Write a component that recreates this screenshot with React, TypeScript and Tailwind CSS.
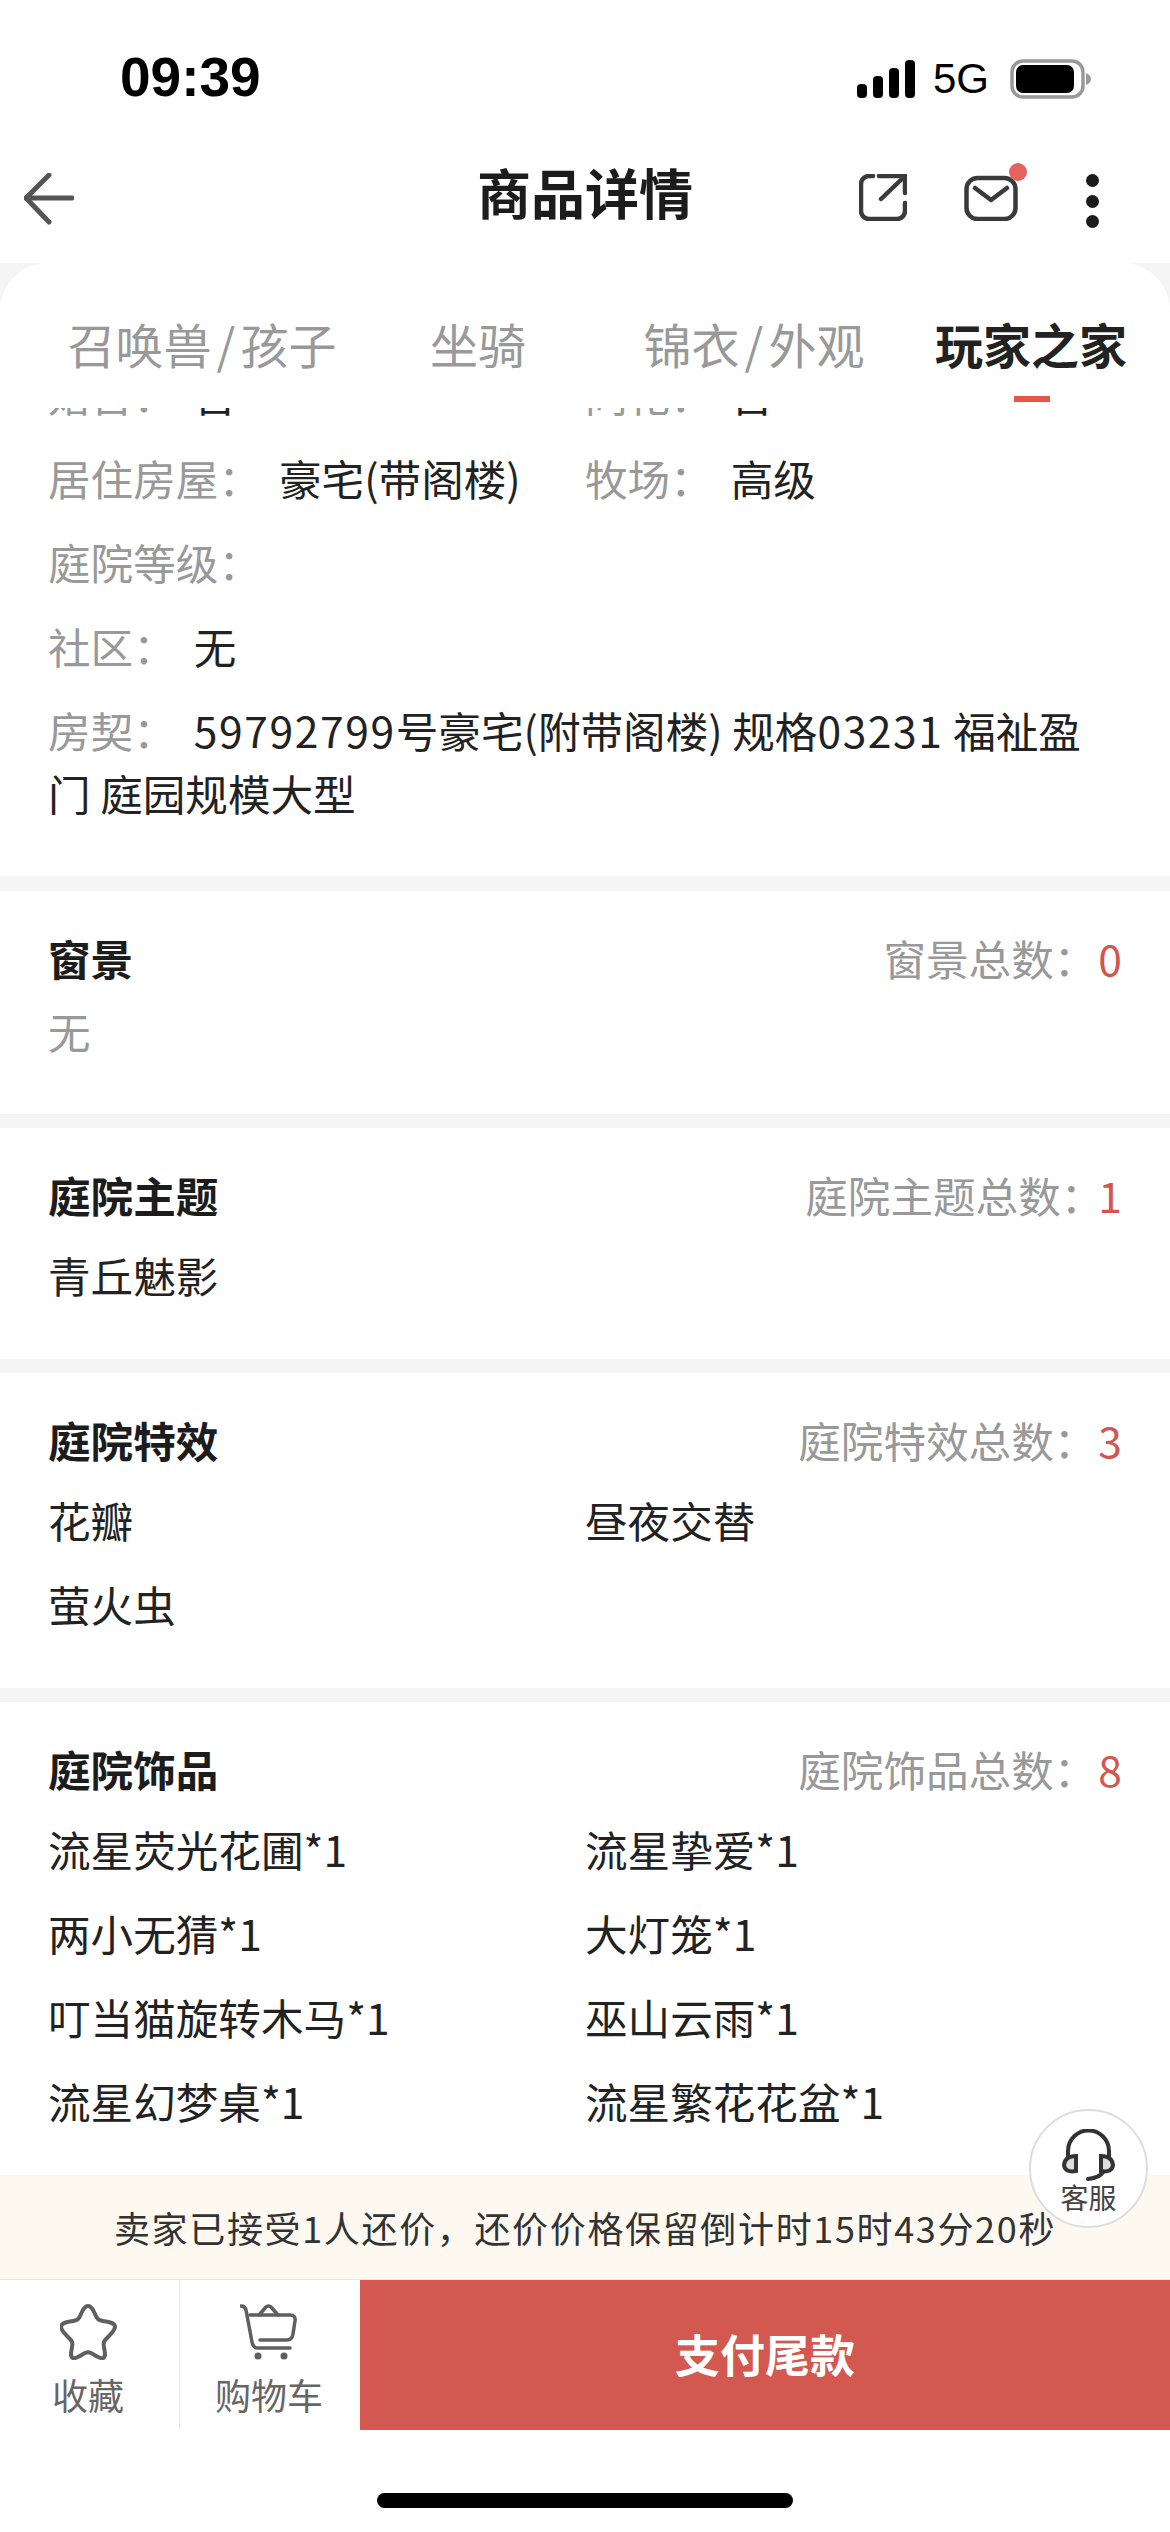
const COLON = "\uFF1A";
const COMMA = "\uFF0C";

const tabs = ["召唤兽/孩子", "坐骑", "锦衣/外观", "玩家之家"];

const sections = [
  { title: "庭院主题", total: "庭院主题总数", count: 1, items: ["青丘魅影"] },
  { title: "庭院特效", total: "庭院特效总数", count: 3, items: ["花瓣", "昼夜交替", "萤火虫"] },
  {
    title: "庭院饰品",
    total: "庭院饰品总数",
    count: 8,
    items: [
      "流星荧光花圃*1",
      "流星挚爱*1",
      "两小无猜*1",
      "大灯笼*1",
      "叮当猫旋转木马*1",
      "巫山云雨*1",
      "流星幻梦桌*1",
      "流星繁花花盆*1",
    ],
  },
];

const Field = ({ label, value }: { label: string; value?: string }) => (
  <div className="flex">
    <span className="text-[#999999]">
      {label}
      {COLON}
    </span>
    {value && <span className="ml-[18px] text-[#222222]">{value}</span>}
  </div>
);

const SectionHead = ({ title, total, count }: { title: string; total: string; count: number }) => (
  <div className="flex items-center justify-between">
    <span className="font-bold text-[#1c1c1c]">{title}</span>
    <span className="flex text-[#999999]">
      {total}
      {COLON}
      {/* the 1 sits tighter against the label than the wider digits */}
      <span className={count === 1 ? "-ml-[5px] text-[#d1574f]" : "ml-[2px] text-[#d1574f]"}>{count}</span>
    </span>
  </div>
);

const Section = ({ title, total, count, items }: (typeof sections)[number]) => (
  <section className="mt-[14px] bg-white px-[48px] pt-[35px] pb-[53px]">
    <SectionHead title={title} total={total} count={count} />
    <div className="mt-[17px] grid grid-cols-2 gap-y-[21px] text-[#222222]">
      {items.map((item) => (
        <div key={item}>{item}</div>
      ))}
    </div>
  </section>
);

export default function App() {
  return (
    <div className="relative flex h-[2532px] w-[1170px] flex-col overflow-hidden bg-[#f5f5f5] [font-family:'Noto_Sans_CJK_SC',sans-serif] text-[42.6px] leading-[63px]">
      {/* status bar + nav */}
      <div className="h-[263px] bg-white">
        <div className="flex h-[130px] items-start justify-between pt-[51px] pr-[78px] pl-[120px]">
          <span className="[font-family:'Liberation_Sans',sans-serif] text-[55px] leading-[52px] font-bold text-black">09:39</span>
          <div className="flex items-center pt-[6px]">
            <svg width="58" height="38" viewBox="0 0 58 38">
              <rect x="0" y="24" width="10" height="14" rx="4" fill="#000" />
              <rect x="16" y="16" width="10" height="22" rx="4" fill="#000" />
              <rect x="32" y="8" width="10" height="30" rx="4" fill="#000" />
              <rect x="48" y="0" width="10" height="38" rx="4" fill="#000" />
            </svg>
            <span className="ml-[18px] [font-family:'Liberation_Sans',sans-serif] text-[42px] leading-[44px] text-black">5G</span>
            <svg className="ml-[21px]" width="82" height="40" viewBox="0 0 82 40">
              <rect x="2" y="2" width="71" height="36" rx="11" fill="none" stroke="#999999" strokeWidth="3.5" />
              <rect x="6" y="6" width="58" height="28" rx="7" fill="#000" />
              <path d="M76 14 Q81 16 81 20 Q81 24 76 26 Z" fill="#999999" />
            </svg>
          </div>
        </div>
        <div className="grid h-[133px] grid-cols-[1fr_auto_1fr] items-start">
          <div className="pt-[43px] pl-[24px]">
            <svg className="block" width="50" height="52" viewBox="0 0 50 52" fill="none" stroke="#555555" strokeWidth="5" strokeLinecap="round" strokeLinejoin="round">
              <path d="M25 2 L2 25 L25 49" />
              <path d="M2 25 H48" />
            </svg>
          </div>
          <div className="pt-[30px] text-[54px] leading-[64px] font-bold text-[#1c1c1c]">商品详情</div>
          <div className="flex items-start justify-end pt-[44px] pr-[71px]">
            <svg width="48" height="47" viewBox="0 0 48 47" fill="none" stroke="#3a3a3a" strokeWidth="4.5" strokeLinecap="round" strokeLinejoin="round">
              <path d="M14 2 H10 A8 8 0 0 0 2 10 V37 A8 8 0 0 0 10 45 H38 A8 8 0 0 0 46 37 V29" />
              <path d="M20 2 H46 V19" />
              <path d="M46 2 L22 25" />
            </svg>
            <div className="relative ml-[57px] h-[47px] w-[54px]">
              <svg width="54" height="47" viewBox="0 0 54 47" fill="none" stroke="#3a3a3a" strokeWidth="4.5" strokeLinecap="round" strokeLinejoin="round">
                <rect x="2.5" y="4" width="49" height="41" rx="11" />
                <path d="M11 14 L27 26 L43 14" />
              </svg>
              <span className="absolute -top-[11px] -right-[9px] h-[18px] w-[18px] rounded-full bg-[#e5635f]" />
            </div>
            <div className="ml-[68px] flex flex-col gap-[7.5px]">
              <span className="h-[13px] w-[13px] rounded-full bg-[#1c1c1c]" />
              <span className="h-[13px] w-[13px] rounded-full bg-[#1c1c1c]" />
              <span className="h-[13px] w-[13px] rounded-full bg-[#1c1c1c]" />
            </div>
          </div>
        </div>
      </div>

      {/* sheet */}
      <div className="flex min-h-0 flex-1 flex-col overflow-hidden rounded-t-[48px] bg-white">
        <div className="z-10 grid h-[145px] shrink-0 grid-cols-4 bg-white pr-[2px] pl-[64px]">
          {tabs.map((tab, i) => {
            const [a, b] = tab.split("/");
            return (
              <div
                key={tab}
                className={
                  i === 3
                    ? "relative pt-[45px] pl-[2px] text-center text-[48px] leading-[70px] font-bold text-[#222222]"
                    : "relative pt-[45px] text-center text-[48px] leading-[70px] text-[#999999]"
                }
              >
                {a}
                {b && (
                  <>
                    <span className="mx-[5px]">/</span>
                    {b}
                  </>
                )}
                {i === 3 && <span className="absolute top-[133px] left-[122px] h-[6px] w-[36px] bg-[#e8534a]" />}
              </div>
            );
          })}
        </div>

        <div className="min-h-0 flex-1 overflow-hidden bg-[#f5f5f5]">
          <div className="-mt-[46px]">
            <section className="bg-white px-[48px] pb-[52px]">
              <div className="grid grid-cols-2 gap-y-[21px]">
                <Field label="婚否" value="否" />
                <Field label="同花" value="否" />
                <Field label="居住房屋" value="豪宅(带阁楼)" />
                <Field label="牧场" value="高级" />
                <Field label="庭院等级" />
                <div />
                <Field label="社区" value="无" />
                <div />
              </div>
              <p className="mt-[21px] text-[#222222]">
                <span className="mr-[18px] text-[#999999]">
                  房契
                  {COLON}
                </span>
                <span className="tracking-[1.6px]">59792799</span>号豪宅(附带阁楼) 规格<span className="tracking-[1.6px]">03231</span> 福祉盈
                <br />门 庭园规模大型
              </p>
            </section>

            <section className="mt-[15px] bg-white px-[48px] pt-[35px] pb-[52px]">
              <SectionHead title="窗景" total="窗景总数" count={0} />
              <div className="mt-[10px] text-[#999999]">无</div>
            </section>

            {sections.map((s) => (
              <Section key={s.title} {...s} />
            ))}
          </div>
        </div>

        {/* counter-offer notice */}
        <div className="flex h-[105px] shrink-0 items-center justify-center border-b border-[#e6e6e6] bg-[#fdf9f0] text-[36px] tracking-[1.65px] text-[#333333]">
          卖家已接受1人还价{COMMA}还价价格保留倒计时15时43分20秒
        </div>

        {/* bottom actions */}
        <div className="flex h-[150px] shrink-0 bg-white">
          <div className="flex w-[180px] flex-col items-center border-r border-[#e6e6e6] pt-[24px] pr-[3px]">
            <svg width="57" height="57" viewBox="0 0 57 57" fill="none" stroke="#5f5f5f" strokeWidth="4" strokeLinejoin="round">
              <path d="M28 2 C31 2 33 5 35 10 C37 15 38 16 43 17 C50 18 55 19 55 23 C55 26 52 29 48 33 C44 37 43 38 44 43 C45 49 46 53 43 54 C40 55 35 51 31 49 C29 48 27 48 25 49 C21 51 16 55 13 54 C10 53 11 49 12 43 C13 38 12 37 8 33 C4 29 1 26 1 23 C1 19 6 18 13 17 C18 16 19 15 21 10 C23 5 25 2 28 2 Z" />
            </svg>
            <span className="mt-[7px] text-[36px] leading-[52px] text-[#666666]">收藏</span>
          </div>
          <div className="flex w-[180px] flex-col items-center pt-[24px] pr-[2px]">
            <svg width="58" height="57" viewBox="0 0 58 57" fill="none" stroke="#5f5f5f" strokeWidth="3.5" strokeLinecap="round" strokeLinejoin="round">
              <path d="M1 2 Q5 2 6 6 L12 38 Q13 44 18 44 L50 44" />
              <path d="M10 11 H50 Q56 11 55 17 L53 30 Q52 36 47 36 L20 36" />
              <path d="M19 11 L26 3 Q28 1 31 3 L38 11" />
              <circle cx="18" cy="52" r="3.5" fill="#5f5f5f" stroke="none" />
              <circle cx="44" cy="52" r="3.5" fill="#5f5f5f" stroke="none" />
            </svg>
            <span className="mt-[7px] text-[36px] leading-[52px] text-[#666666]">购物车</span>
          </div>
          <div className="flex flex-1 items-center justify-center bg-[#d25850] pb-[3px] text-[45px] font-bold text-white">
            支付尾款
          </div>
        </div>

        {/* home indicator */}
        <div className="flex h-[102px] shrink-0 justify-center bg-white pt-[63px]">
          <span className="h-[15px] w-[416px] rounded-full bg-black" />
        </div>
      </div>

      {/* floating customer service */}
      <div className="absolute top-[2109px] left-[1029px] flex h-[119px] w-[119px] flex-col items-center rounded-full border-2 border-[#dddddd] bg-white/90 pt-[18px]">
        <svg width="55" height="52" viewBox="0 0 55 52" fill="none" stroke="#333333" strokeWidth="4" strokeLinecap="round">
          <path d="M7 28 V22 A20.5 20.5 0 0 1 48 22 V28" />
          <path d="M15 27 Q4 27 3 36 Q4 44 15 42 Z" fill="#dddddd" />
          <path d="M40 27 Q51 27 52 36 Q51 44 40 42 Z" fill="#dddddd" />
          <path d="M42 43 C40 47 35 49 27 50" />
        </svg>
        <span className="text-[28px] leading-[32px] text-[#444444]">客服</span>
      </div>
    </div>
  );
}
